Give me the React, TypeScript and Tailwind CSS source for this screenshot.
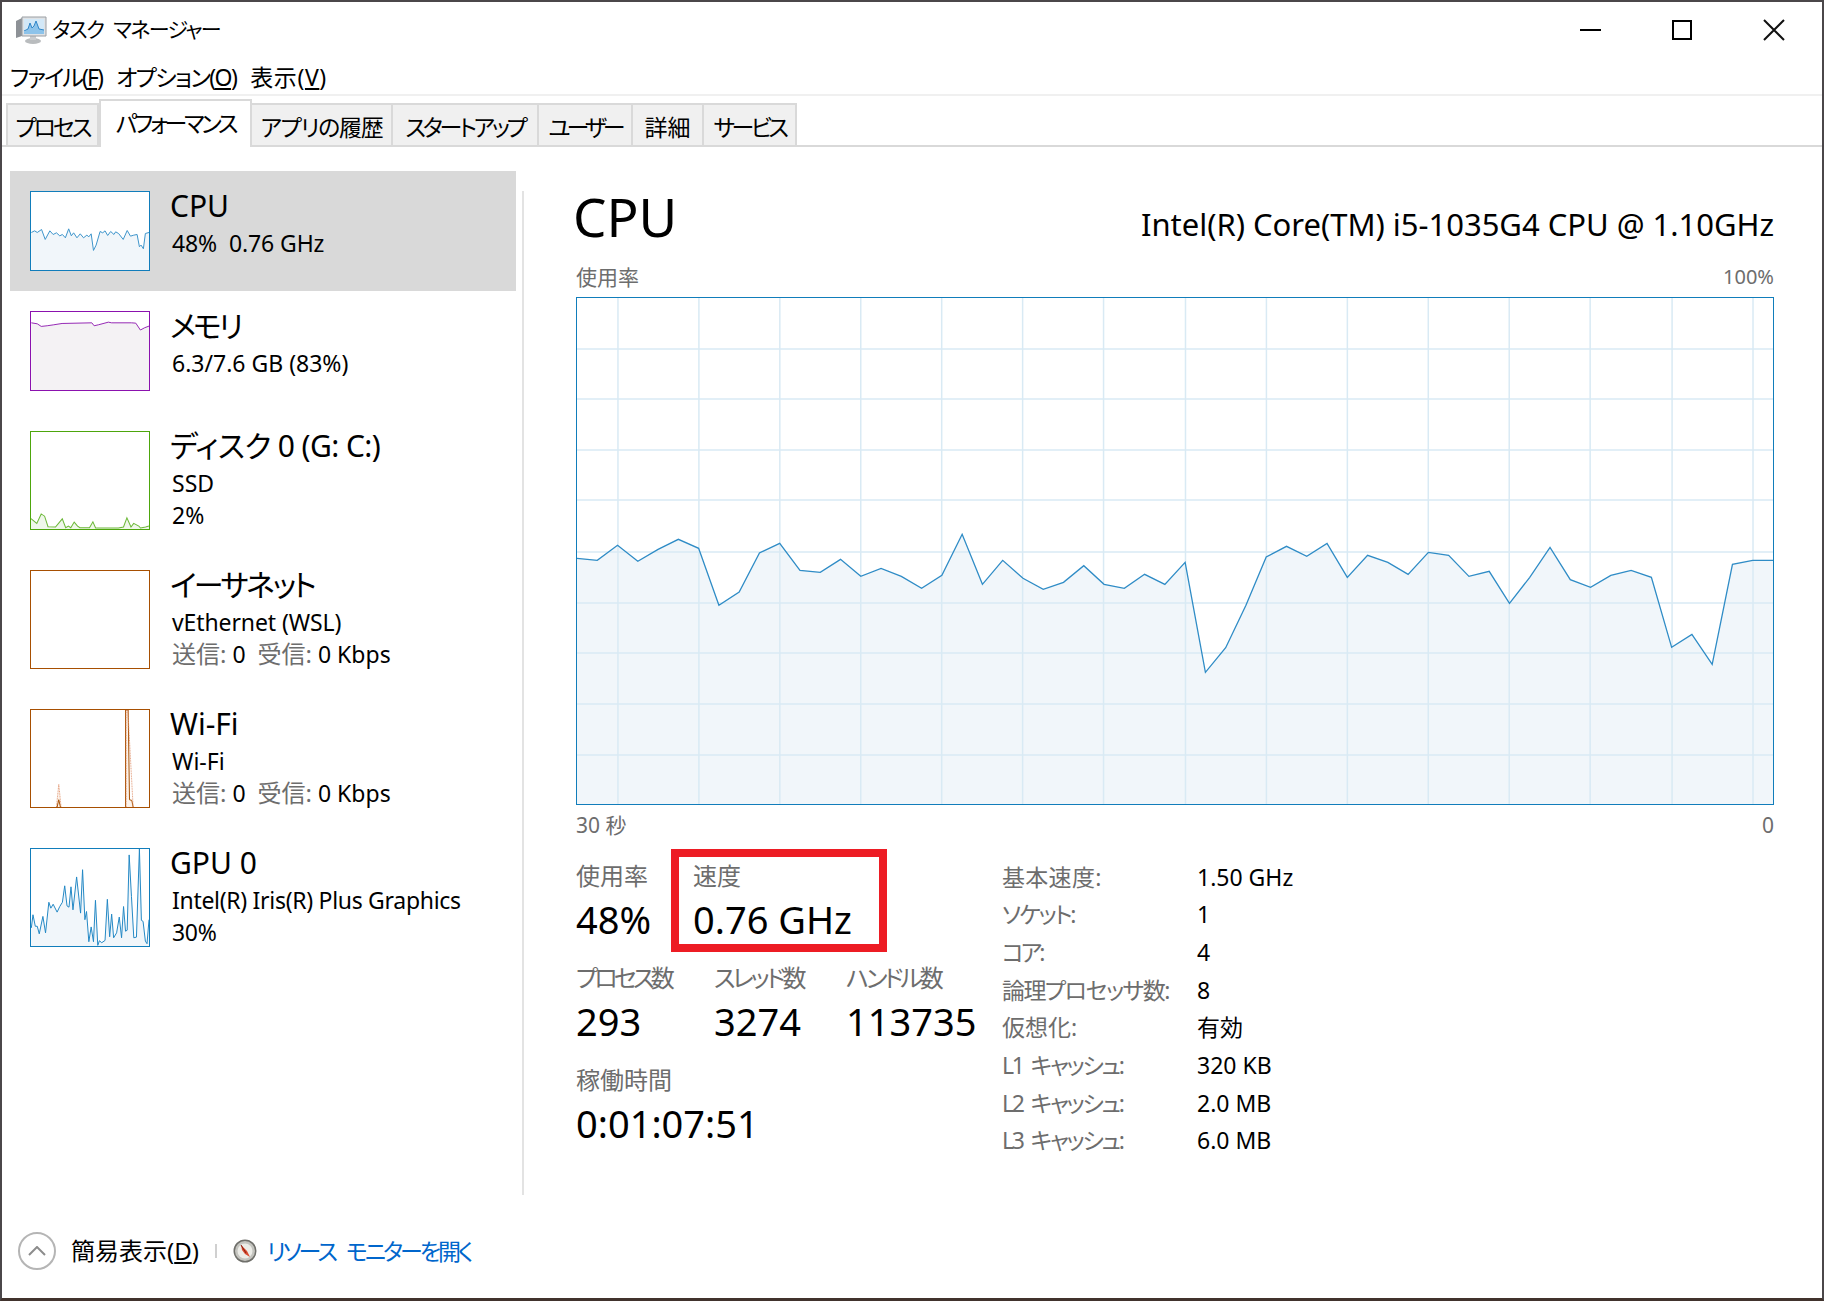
const tabs = [
  { label: 'プロセス', w: 'w-[93px]', track: 'tracking-[-3px]' },
  { label: 'パフォーマンス', w: 'w-[153px]', track: 'tracking-[-3.3px]' },
  { label: 'アプリの履歴', w: 'w-[141px]', track: 'tracking-[-1.3px]' },
  { label: 'スタートアップ', w: 'w-[146px]', track: 'tracking-[-3.2px]' },
  { label: 'ユーザー', w: 'w-[94px]', track: 'tracking-[-4px]' },
  { label: '詳細', w: 'w-[71px]', track: '' },
  { label: 'サービス', w: 'w-[93px]', track: 'tracking-[-3.5px]' },
];

// CPU usage samples, read off the big chart
const cpuY = [
  172, 178, 133, 181, 145, 115, 142, 313, 273, 156, 127, 208, 214, 175, 226, 202, 226, 262, 223, 100,
  250, 178, 232, 265, 244, 194, 250, 262, 220, 250, 184, 514, 440, 313, 168, 136, 166, 127, 229, 163,
  184, 220, 154, 163, 226, 211, 307, 229, 139, 236, 259, 223, 208, 229, 439, 400, 490, 190, 178, 178,
];
const chartPoints = cpuY.map((y, i) => `${(i * 1197) / 59},${500 + y / 3 - 297}`).join(' ');
const hLines = [51, 101, 152, 202, 254, 305, 355, 406, 457];
const vLines = [41, 122, 203, 284, 365, 446, 527, 609, 690, 771, 852, 933, 1014, 1096, 1177];

type Thumb = {
  box: string;
  border: string;
  h: string;
  fill: string;
  line?: string;
  pts?: string;
  extra?: string;
};

const thumbs: Record<string, Thumb> = {
  cpu: {
    box: '61 65 357 235', border: 'border-[#117dbb]', h: 'h-[80px]', fill: '#f1f6fa', line: '#3d94cb',
    pts: '62,187 72,182 80,187 93,178 104,208 118,182 128,193 138,188 148,197 156,193 165,203 175,176 183,197 190,188 200,203 210,191 220,203 230,195 236,200 243,191 250,241 258,225 270,184 278,188 285,182 293,196 302,184 312,193 317,185 326,190 340,208 352,181 362,198 372,195 382,193 389,230 394,225 401,236 407,190 418,187',
  },
  mem: {
    box: '61 424 357 238', border: 'border-[#8b12ae]', h: 'h-[80px]', fill: '#f4f2f4', line: '#9428b4',
    pts: '62,457 80,460 92,468 110,466 130,463 155,459 245,457 252,466 265,463 295,455 305,457 365,457 378,458 392,479 405,472 418,467',
  },
  disk: {
    box: '88 393 347 296', border: 'border-[#4da60c]', h: 'h-[99px]', fill: '#eff7ea', line: '#6cb838',
    pts: '88,657 105,672 118,643 128,650 138,682 160,683 180,658 190,685 198,680 205,685 215,668 225,680 232,685 260,685 270,667 278,686 345,686 360,683 370,655 382,683 390,672 405,680 410,686 425,683 435,680',
  },
  eth: { box: '0 0 120 99', border: 'border-[#a74f01]', h: 'h-[99px]', fill: 'none' },
  wifi: {
    box: '61 28 357 294', border: 'border-[#a74f01]', h: 'h-[99px]', fill: '#fcf3eb', line: '#a74f01',
    pts: '347,322 347,28 355,28 359,300 366,302 370,322',
    extra: '138,322 145,253 152,322',
  },
  gpu: {
    box: '61 445 357 295', border: 'border-[#117dbb]', h: 'h-[99px]', fill: '#f1f6fa', line: '#2288c4',
    pts: '62,685 67,645 74,680 80,680 86,703 97,650 105,700 115,607 121,625 128,613 140,637 148,620 156,607 163,557 170,618 176,622 182,560 188,630 199,530 211,640 217,508 224,660 229,635 236,727 243,682 250,727 256,601 263,738 268,724 275,730 285,723 292,598 299,712 305,643 311,715 320,700 328,652 335,715 341,620 347,695 352,692 358,463 365,590 372,715 380,713 389,445 395,662 400,665 407,725 412,733 418,660',
  },
};

const closeArea = (pts: string, box: string) => {
  const [x, y, w, h] = box.split(' ').map(Number);
  const first = pts.split(' ')[0].split(',')[0];
  const last = pts.split(' ').slice(-1)[0].split(',')[0];
  return `${first},${y + h} ${pts} ${last},${y + h} ${x + w},${y + h}`;
};

const MiniGraph = ({ kind }: { kind: string }) => {
  const t = thumbs[kind];
  return (
    <div className={`w-[120px] shrink-0 bg-white border ${t.border} ${t.h}`}>
      <svg viewBox={t.box} preserveAspectRatio="none" className="w-full h-full block">
        {t.pts && <polygon points={closeArea(t.pts, t.box)} fill={t.fill} />}
        {t.pts && <polyline points={t.pts} fill="none" stroke={t.line} strokeWidth="3" />}
        {t.extra && <polygon points={t.extra} fill="#fcf3eb" />}
        {t.extra && <polyline points={t.extra} fill="none" stroke="#e0916b" strokeWidth="2.5" strokeDasharray="3 2" />}
        {t.extra && <polyline points="349,322 349,28 354,28 370,322" fill="none" stroke="#e0916b" strokeWidth="2.5" strokeDasharray="3 2" />}
        {t.extra && <polyline points="140,322 145,300 150,322" fill="none" stroke="#a74f01" strokeWidth="3" />}
      </svg>
    </div>
  );
};

const NetLine = () => (
  <div className="h-[32px] leading-[32px] text-[23px] whitespace-pre">
    <span className="text-[#6d6d6d] text-[24px]">送信:</span> 0  <span className="text-[#6d6d6d] text-[24px]">受信:</span> 0 Kbps
  </div>
);

const SideItem = ({ kind, title, titleTrack, lines, lineTrack, selected, net }: { kind: string; title: string; titleTrack?: string; lines: string[]; lineTrack?: string; selected?: boolean; net?: boolean }) => (
  <div className={`flex pt-[20px] pl-[20px] ${selected ? 'bg-[#d9d9d9]' : ''} ${kind === 'cpu' || kind === 'mem' ? 'h-[120px]' : 'h-[139px]'}`}>
    <MiniGraph kind={kind} />
    <div className="ml-[20px] pl-[2px]">
      <div className={`h-[38px] leading-[38px] -mt-[4px] text-[30px] -ml-[2px] whitespace-nowrap ${titleTrack ?? ''}`}>{title}</div>
      <div className="mt-[2px]">
        {lines.map(l => (
          <div key={l} className={`h-[32px] leading-[32px] text-[23px] whitespace-pre ${lineTrack ?? ''}`}>{l}</div>
        ))}
        {net && <NetLine />}
      </div>
    </div>
  </div>
);

const Stat = ({ label, value, width, track }: { label: string; value: string; width: string; track?: string }) => (
  <div className={`${width} shrink-0`}>
    <div className={`h-[34px] leading-[34px] text-[24px] text-[#6d6d6d] whitespace-nowrap ${track ?? ''}`}>{label}</div>
    <div className="h-[52px] leading-[52px] text-[38px] whitespace-nowrap">{value}</div>
  </div>
);

const specs = [
  { k: '基本速度:', v: '1.50 GHz', track: 'tracking-[0.3px]' },
  { k: 'ソケット:', v: '1', track: 'tracking-[-2px]' },
  { k: 'コア:', v: '4', track: 'tracking-[-3px]' },
  { k: '論理プロセッサ数:', v: '8', track: 'tracking-[-1.5px]' },
  { k: '仮想化:', v: '有効', track: '' },
  { k: 'L1 キャッシュ:', v: '320 KB', track: 'tracking-[-2.2px] [word-spacing:4px]' },
  { k: 'L2 キャッシュ:', v: '2.0 MB', track: 'tracking-[-2.2px] [word-spacing:4px]' },
  { k: 'L3 キャッシュ:', v: '6.0 MB', track: 'tracking-[-2.2px] [word-spacing:4px]' },
];

const TaskMgrIcon = () => (
  <svg width="32" height="30" viewBox="0 0 32 30" className="shrink-0">
    <ellipse cx="18" cy="26" rx="8" ry="3" fill="#b9bcbe" />
    <rect x="15" y="20" width="6" height="5" fill="#c9cccf" />
    <polygon points="1,6 7,3 7,21 1,23" fill="#8d9196" />
    <polygon points="7,2 31,2 31,21 7,21" fill="#dfe2e5" stroke="#9a9ea3" />
    <rect x="9" y="4" width="20" height="15" fill="#d3e8f7" />
    <polygon points="9,17 13,14 15,8 17,13 19,11 21,6 24,14 29,15 29,19 9,19" fill="#8dc3ea" />
    <polyline points="9,16 13,14 15,8 17,13 19,11 21,6 24,14 29,15" fill="none" stroke="#2f86c9" strokeWidth="1" />
  </svg>
);

const ResMonIcon = () => (
  <svg width="24" height="24" viewBox="0 0 24 24" className="shrink-0">
    <circle cx="12" cy="12" r="11.5" fill="#6f6f6a" />
    <circle cx="12" cy="12" r="10" fill="#c4c4bf" />
    <circle cx="12" cy="12" r="7.5" fill="#ecece7" />
    <polygon points="8,6 11,9 14,12 17,18 12,15 9,11" fill="#d8492f" />
    <line x1="8" y1="6" x2="13" y2="14" stroke="#8a1f10" strokeWidth="1" />
  </svg>
);

export default function App() {
  return (
    <div className="w-[1824px] h-[1301px] bg-white text-black flex flex-col overflow-hidden border-t-2 border-l-2 border-r-2 border-b-[3px] border-t-[#4b474a] border-l-[#4b474a] border-r-[#4b474a] border-b-[#41332d] font-['Noto_Sans','Noto_Sans_CJK_JP',sans-serif] [font-feature-settings:'palt']">
      {/* Title bar */}
      <div className="h-[52px] shrink-0 flex items-center pl-[13px] pt-[4px]">
        <TaskMgrIcon />
        <span className="ml-[5px] text-[21px] tracking-[-1.6px] [word-spacing:6px]">タスク マネージャー</span>
        <div className="ml-auto flex items-center h-full">
          <div className="w-[92px] flex justify-center">
            <div className="w-[21px] h-[2px] bg-black" />
          </div>
          <div className="w-[92px] flex justify-center">
            <div className="w-[20px] h-[20px] border-2 border-black" />
          </div>
          <div className="w-[92px] flex justify-center mr-[2px]">
            <svg width="22" height="22" viewBox="0 0 22 22">
              <path d="M1 1L21 21M21 1L1 21" stroke="#111" strokeWidth="2" fill="none" />
            </svg>
          </div>
        </div>
      </div>

      {/* Menu */}
      <div className="h-[42px] shrink-0 flex items-center pl-[8px] pt-[7px] gap-[14px] text-[23px] border-b-2 border-[#f0f0f0]">
        <span className="tracking-[-1.9px]">ファイル(<span className="underline">F</span>)</span>
        <span className="tracking-[-1.6px]">オプション(<span className="underline">O</span>)</span>
        <span className="tracking-[0.6px]">表示(<span className="underline">V</span>)</span>
      </div>

      {/* Tabs */}
      <div className="h-[51px] shrink-0 flex items-end pl-[4px] border-b-2 border-[#d9d9d9]">
        {tabs.map((t, i) =>
          i === 1 ? (
            <div key={t.label} className={`${t.w} ${t.track} h-[48px] -mb-[2px] bg-white border-x-2 border-t-2 border-[#d9d9d9] flex items-center justify-center text-[23px] pb-[1px]`}>
              {t.label}
            </div>
          ) : (
            <div key={t.label} className={`${t.w} ${t.track} h-[42px] bg-[#f0f0f0] border-t-2 border-r-2 border-[#d9d9d9] ${i === 0 ? 'border-l-2' : ''} flex items-center justify-center text-[23px] pt-[5px]`}>
              {t.label}
            </div>
          )
        )}
      </div>

      {/* Body */}
      <div className="flex h-[1048px] shrink-0 pt-[24px]">
        <div className="w-[506px] ml-[8px] shrink-0">
          <SideItem kind="cpu" title="CPU" lines={['48%  0.76 GHz']} lineTrack="tracking-[-0.1px]" selected />
          <SideItem kind="mem" title="メモリ" titleTrack="tracking-[-3px]" lines={['6.3/7.6 GB (83%)']} />
          <SideItem kind="disk" title="ディスク 0 (G: C:)" titleTrack="tracking-[-0.6px]" lines={['SSD', '2%']} />
          <SideItem kind="eth" title="イーサネット" titleTrack="tracking-[-2.5px]" lines={['vEthernet (WSL)']} lineTrack="tracking-[-0.1px]" net />
          <SideItem kind="wifi" title="Wi-Fi" lines={['Wi-Fi']} net />
          <SideItem kind="gpu" title="GPU 0" lines={['Intel(R) Iris(R) Plus Graphics', '30%']} lineTrack="tracking-[-0.3px]" />
        </div>
        <div className="w-[2px] bg-[#e3e3e3] mt-[20px] ml-[6px] shrink-0" />

        <div className="ml-[52px] w-[1198px] shrink-0">
          <div className="h-[91px] flex justify-between items-start">
            <div className="text-[53px] leading-[72px] -ml-[3px] mt-[10px]">CPU</div>
            <div className="text-[31px] leading-[40px] mt-[33px] tracking-[-0.02px]">Intel(R) Core(TM) i5-1035G4 CPU @ 1.10GHz</div>
          </div>
          <div className="h-[35px] flex justify-between text-[21px] leading-[30px] text-[#6d6d6d]">
            <span>使用率</span>
            <span className="text-[20px]">100%</span>
          </div>

          <div className="w-[1198px] h-[508px] border border-[#117dbb] bg-white">
            <svg viewBox="0 0 1197 506" preserveAspectRatio="none" className="w-full h-full block">
              <polygon points={`0,506 ${chartPoints} 1197,506`} fill="#f1f6fa" />
              {hLines.map(y => (
                <line key={y} x1="0" x2="1197" y1={y} y2={y} stroke="#d9eaf4" strokeWidth="1.5" />
              ))}
              {vLines.map(x => (
                <line key={x} x1={x} x2={x} y1="0" y2="506" stroke="#d9eaf4" strokeWidth="1.5" />
              ))}
              <polyline points={chartPoints} fill="none" stroke="#2f8cc6" strokeWidth="1.3" />
            </svg>
          </div>

          <div className="h-[39px] flex justify-between items-center text-[21px] text-[#6d6d6d] pt-[3px]">
            <span>30 秒</span>
            <span>0</span>
          </div>

          <div className="flex pt-[15px]">
            <div className="w-[426px] shrink-0 flex flex-col gap-[16px]">
              <div className="flex relative">
                <Stat label="使用率" value="48%" width="w-[117px]" />
                <Stat label="速度" value="0.76 GHz" width="w-[190px]" />
                <div className="absolute left-[95px] -top-[10px] w-[216px] h-[103px] border-[8px] border-[#ed1c24]" />
              </div>
              <div className="flex">
                <Stat label="プロセス数" value="293" width="w-[138px]" track="tracking-[-3.8px]" />
                <Stat label="スレッド数" value="3274" width="w-[132px]" track="tracking-[-3px]" />
                <Stat label="ハンドル数" value="113735" width="w-[150px]" track="tracking-[-3px]" />
              </div>
              <Stat label="稼働時間" value="0:01:07:51" width="w-[300px]" />
            </div>

            <div className="flex flex-col -mt-[1px]">
              {specs.map(s => (
                <div key={s.k} className="flex h-[37.7px] items-center text-[23px]">
                  <span className={`w-[195px] text-[#6d6d6d] whitespace-nowrap ${s.track}`}>{s.k}</span>
                  <span>{s.v}</span>
                </div>
              ))}
            </div>
          </div>
        </div>
      </div>

      {/* Footer */}
      <div className="flex-1 flex items-center pl-[16px] pt-[8px]">
        <div className="w-[38px] h-[38px] rounded-full border-2 border-[#b5b5b5] flex items-center justify-center shrink-0">
          <svg width="18" height="10" viewBox="0 0 18 10">
            <path d="M1 9L9 1L17 9" stroke="#8c8c8c" strokeWidth="2" fill="none" />
          </svg>
        </div>
        <span className="ml-[15px] text-[24px] pt-[1px]">簡易表示(<span className="underline">D</span>)</span>
        <div className="w-[2px] h-[14px] bg-[#d0d0d0] ml-[16px]" />
        <div className="ml-[16px]"><ResMonIcon /></div>
        <span className="ml-[10px] text-[23px] text-[#0066cc] tracking-[-3px] [word-spacing:8px] pt-[1px]">リソース モニターを開く</span>
      </div>
    </div>
  );
}
